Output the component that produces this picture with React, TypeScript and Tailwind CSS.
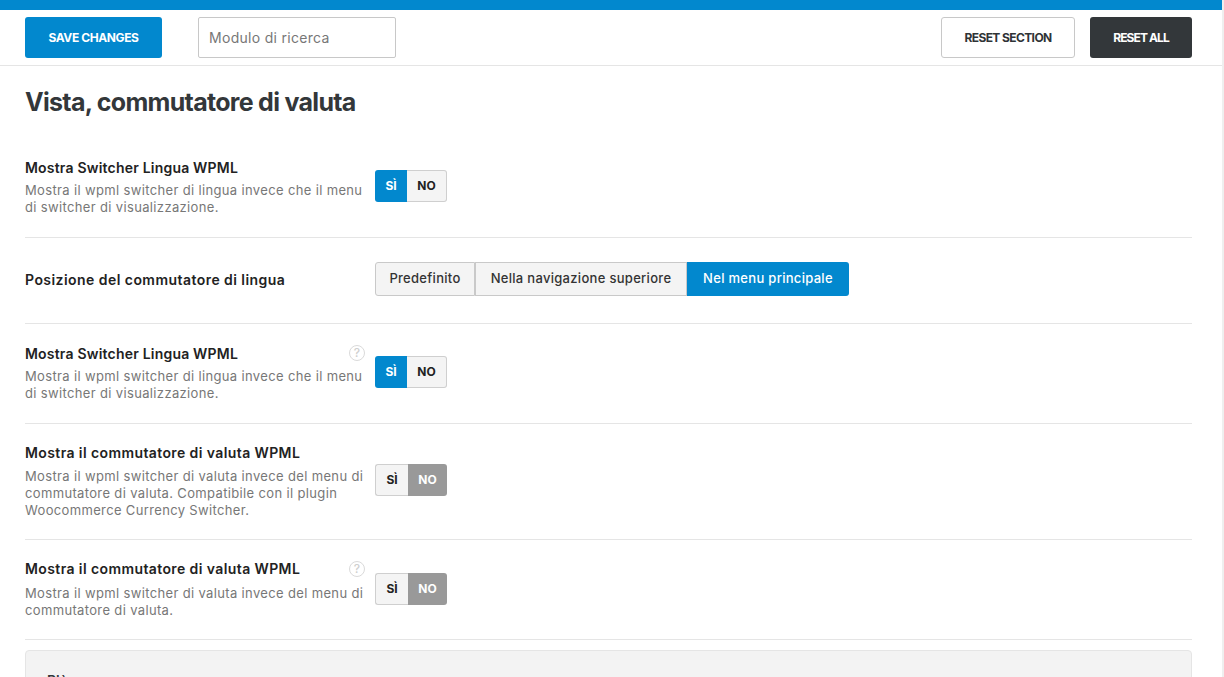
const FONT = "font-['Inter','Noto_Sans',sans-serif]"

function YesNo({ value, lift = 'mb-[4px]' }: { value: 'si' | 'no'; lift?: string }) {
  const on = value === 'si'
  return (
    <div className={`flex h-[32px] text-[12px] font-bold ${lift}`}>
      <div
        className={`flex items-center justify-center rounded-l-[3px] ${
          on
            ? 'w-[32px] bg-[#0288ce] text-white'
            : 'w-[33px] border border-r-0 border-[#cfcfcf] bg-[#f4f4f4] text-[#222]'
        }`}
      >
        SÌ
      </div>
      <div
        className={`flex items-center justify-center rounded-r-[3px] ${
          on
            ? 'w-[40px] border border-l-0 border-[#cfcfcf] bg-[#f4f4f4] text-[#222]'
            : 'w-[39px] bg-[#999] text-white'
        }`}
      >
        NO
      </div>
    </div>
  )
}

function HelpIcon() {
  return (
    <span className="flex h-[16px] w-[16px] shrink-0 items-center justify-center rounded-full border-[1.5px] border-[#dadada] text-[12px] font-medium leading-none text-[#cfcfcf]">
      ?
    </span>
  )
}

function OptionRow({
  title,
  titleClass = 'tracking-[0.4px]',
  lines,
  value,
  help,
  height,
  gap = 'mt-[6px]',
  lift,
}: {
  title: string
  titleClass?: string
  lines: string[]
  value: 'si' | 'no'
  help?: boolean
  height: string
  gap?: string
  lift?: string
}) {
  return (
    <div className={`flex items-center border-b border-[#e5e5e5] ${height}`}>
      <div className="mb-[1px] w-[350px] shrink-0 pr-[10px]">
        <div className="flex h-[18px] items-center justify-between">
          <span className={`text-[14px] font-semibold text-[#222] ${titleClass}`}>{title}</span>
          {help && <HelpIcon />}
        </div>
        <div className={`text-[13px] leading-[17px] tracking-[0.35px] text-[#777] ${gap}`}>
          {lines.map((line) => (
            <div key={line} className="whitespace-nowrap">
              {line}
            </div>
          ))}
        </div>
      </div>
      <YesNo value={value} lift={lift} />
    </div>
  )
}

function PositionRow() {
  const options = [
    { label: 'Predefinito', cls: 'w-[100px] rounded-l-[3px] border border-[#c9c9c9] bg-[#f4f4f4] text-[#333]' },
    { label: 'Nella navigazione superiore', cls: 'w-[212px] border border-[#c9c9c9] bg-[#f4f4f4] text-[#333]' },
    { label: 'Nel menu principale', cls: 'w-[162px] rounded-r-[3px] bg-[#0288ce] text-white' },
  ]
  return (
    <div className="flex h-[86px] items-center border-b border-[#e5e5e5]">
      <div className="mb-[2px] w-[350px] shrink-0 text-[14px] font-semibold tracking-[0.45px] text-[#222]">
        Posizione del commutatore di lingua
      </div>
      <div className="mb-[4px] flex h-[34px] text-[13px] font-medium tracking-[0.3px]">
        {options.map((o) => (
          <div key={o.label} className={`flex items-center justify-center ${o.cls}`}>
            {o.label}
          </div>
        ))}
      </div>
    </div>
  )
}

export default function App() {
  return (
    <div className={`h-[677px] overflow-hidden border-r-2 border-[#efefef] bg-white ${FONT}`}>
      <div className="h-[10px] bg-[#0288ce]" />
      <div className="flex h-[56px] items-start border-b border-[#e5e5e5] pl-[25px] pr-[30px] pt-[7px]">
        <button
          type="button"
          className="h-[41px] w-[137px] rounded-[3px] bg-[#0288ce] pt-[1px] text-[12px] font-bold tracking-[-0.4px] text-white"
        >
          SAVE CHANGES
        </button>
        <div className="ml-[36px] flex h-[41px] w-[198px] items-center rounded-[2px] border border-[#c8c8c8] px-[10px] text-[14px] tracking-[0.3px] text-[#777]">
          Modulo di ricerca
        </div>
        <button
          type="button"
          className="ml-auto h-[41px] w-[134px] rounded-[3px] border border-[#c8c8c8] bg-white pt-[1px] text-[12px] font-bold tracking-[-0.6px] text-[#2f3336]"
        >
          RESET SECTION
        </button>
        <button
          type="button"
          className="ml-[15px] h-[41px] w-[102px] rounded-[3px] bg-[#33373a] pt-[1px] text-[12px] font-bold tracking-[-0.9px] text-white"
        >
          RESET ALL
        </button>
      </div>

      <div className="pl-[25px] pr-[30px]">
        <h1 className="flex h-[72px] items-center pt-[1px] text-[25px] font-bold tracking-[-0.7px] text-[#33373a]">
          Vista, commutatore di valuta
        </h1>
        <OptionRow
          height="h-[100px]"
          titleClass="tracking-[0.2px]"
          title="Mostra Switcher Lingua WPML"
          lines={['Mostra il wpml switcher di lingua invece che il menu', 'di switcher di visualizzazione.']}
          value="si"
        />
        <PositionRow />
        <OptionRow
          height="h-[100px]"
          titleClass="tracking-[0.2px]"
          help
          title="Mostra Switcher Lingua WPML"
          lines={['Mostra il wpml switcher di lingua invece che il menu', 'di switcher di visualizzazione.']}
          value="si"
        />
        <OptionRow
          height="h-[116px]"
          title="Mostra il commutatore di valuta WPML"
          lines={[
            'Mostra il wpml switcher di valuta invece del menu di',
            'commutatore di valuta. Compatibile con il plugin',
            'Woocommerce Currency Switcher.',
          ]}
          value="no"
        />
        <OptionRow
          height="h-[100px]"
          gap="mt-[7px]"
          lift="mb-[2px]"
          help
          title="Mostra il commutatore di valuta WPML"
          lines={['Mostra il wpml switcher di valuta invece del menu di', 'commutatore di valuta.']}
          value="no"
        />
        <div className="mt-[10px] h-[60px] rounded-[4px] border border-[#e5e5e5] bg-[#f3f3f3] pl-[21px] pt-[21px] text-[14px] font-semibold leading-[18px] text-[#33373a]">
          Più
        </div>
      </div>
    </div>
  )
}
